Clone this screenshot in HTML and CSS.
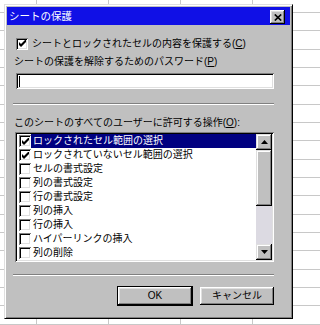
FILE: index.html
```html
<!DOCTYPE html>
<html lang="ja">
<head>
<meta charset="utf-8">
<link rel="stylesheet" href="styles.css">
</head>
<body>
<div class="dialog">
  <div class="titlebar">
    <span class="title">シートの保護</span>
    <span class="close"><svg width="8" height="7" viewBox="0 0 8 7"><path d="M0.8 0.5 L7.2 6.5 M7.2 0.5 L0.8 6.5" stroke="#000" stroke-width="1.7" fill="none"/></svg></span>
  </div>
  <div class="content">
    <div class="check-row">
      <span class="cb"><svg width="7" height="7" viewBox="0 0 7 7"><path d="M0 2 L2 4 L7 -1 L7 2 L2 7 L0 5 Z" fill="#000"/></svg></span>
      <span class="cb-label">シートとロックされたセルの内容を保護する(<u>C</u>)</span>
    </div>
    <div class="label pw-label">シートの保護を解除するためのパスワード(<u>P</u>)</div>
    <div class="textbox"><span class="caret"></span></div>
    <div class="sep sep-top"></div>
    <div class="label ops-label">このシートのすべてのユーザーに許可する操作(<u>O</u>):</div>
    <div class="list">
      <div class="rows">
        <div class="row selected"><span class="cb small"><svg width="7" height="7" viewBox="0 0 7 7"><path d="M0 2 L2 4 L7 -1 L7 2 L2 7 L0 5 Z" fill="#000"/></svg></span><span class="row-text">ロックされたセル範囲の選択</span></div>
        <div class="row"><span class="cb small"><svg width="7" height="7" viewBox="0 0 7 7"><path d="M0 2 L2 4 L7 -1 L7 2 L2 7 L0 5 Z" fill="#000"/></svg></span><span class="row-text">ロックされていないセル範囲の選択</span></div>
        <div class="row"><span class="cb small"></span><span class="row-text">セルの書式設定</span></div>
        <div class="row"><span class="cb small"></span><span class="row-text">列の書式設定</span></div>
        <div class="row"><span class="cb small"></span><span class="row-text">行の書式設定</span></div>
        <div class="row"><span class="cb small"></span><span class="row-text">列の挿入</span></div>
        <div class="row"><span class="cb small"></span><span class="row-text">行の挿入</span></div>
        <div class="row"><span class="cb small"></span><span class="row-text">ハイパーリンクの挿入</span></div>
        <div class="row"><span class="cb small"></span><span class="row-text">列の削除</span></div>
      </div>
      <div class="scrollbar">
        <div class="sb-btn"><svg width="7" height="4" viewBox="0 0 7 4"><path d="M3.5 0 L7 4 L0 4 Z" fill="#000"/></svg></div>
        <div class="sb-thumb"></div>
        <div class="sb-track"></div>
        <div class="sb-btn"><svg width="7" height="4" viewBox="0 0 7 4"><path d="M0 0 L7 0 L3.5 4 Z" fill="#000"/></svg></div>
      </div>
    </div>
    <div class="sep sep-bottom"></div>
    <div class="buttons">
      <button class="btn default">OK</button>
      <button class="btn">キャンセル</button>
    </div>
  </div>
</div>
</body>
</html>
```
FILE: styles.css
```css
html, body {
  margin: 0;
  padding: 0;
}
body {
  width: 294px;
  height: 325px;
  overflow: hidden;
  background-color: #fff;
  background-image:
    repeating-linear-gradient(to right, transparent 0 36px, #c8c8c8 36px 37px, transparent 37px 72px),
    repeating-linear-gradient(to bottom, transparent 0 12px, #c8c8c8 12px 13px, transparent 13px 18.33px);
  background-position: 0 0, 0 0;
  font-family: "Liberation Sans", "Noto Sans CJK JP", sans-serif;
  font-size: 10px;
  color: #000;
}
.dialog {
  box-sizing: border-box;
  width: 289px;
  height: 315px;
  margin: 4px 0 0 4px;
  padding: 2px;
  background: #c0c0c0;
  border: 1px solid;
  border-color: #dfdfdf #000 #000 #dfdfdf;
  box-shadow: inset 1px 1px #fff, inset -1px -1px #808080;
}
.titlebar {
  height: 18px;
  background: #1010e6;
  display: flex;
  align-items: flex-start;
  justify-content: space-between;
}
.title {
  color: #fff;
  font-size: 10.5px;
  line-height: 18px;
  padding-left: 2px;
}
.close {
  box-sizing: border-box;
  width: 15px;
  height: 14px;
  margin: 3px 5px 0 0;
  background: #c0c0c0;
  box-shadow: inset -1px -1px #000, inset 1px 1px #fff, inset -2px -2px #808080, inset 2px 2px #dfdfdf;
  display: flex;
  align-items: center;
  justify-content: center;
}
.content {
  padding: 0 16px 0 6px;
}
.check-row {
  display: flex;
  align-items: center;
  height: 13px;
  margin: 12px 0 0 3px;
}
.cb {
  box-sizing: border-box;
  width: 12px;
  height: 12px;
  flex: none;
  background: #fff;
  box-shadow: inset 1px 1px #808080, inset -1px -1px #fff, inset 2px 2px #000, inset -2px -2px #dfdfdf;
  display: flex;
  align-items: center;
  justify-content: center;
}
.cb svg {
  display: block;
}
.cb-label {
  margin-left: 4px;
  line-height: 13px;
  white-space: nowrap;
}
.label {
  line-height: 12px;
  padding-left: 1px;
  white-space: nowrap;
}
.pw-label {
  margin-top: 6px;
}
.textbox {
  box-sizing: border-box;
  height: 16px;
  margin: 5px 0 0 3px;
  background: #fff;
  box-shadow: inset 1px 1px #808080, inset -1px -1px #fff, inset 2px 2px #000, inset -2px -2px #dfdfdf;
  padding: 3px 0 0 3px;
}
.caret {
  display: block;
  width: 1px;
  height: 11px;
  background: #000;
}
.sep {
  height: 1px;
  border-top: 1px solid #808080;
  border-bottom: 1px solid #fff;
  height: 0;
}
.sep-top {
  margin-top: 14px;
}
.ops-label {
  margin-top: 12px;
}
.list {
  box-sizing: border-box;
  height: 130px;
  margin: 3px 0 0 2px;
  padding: 2px;
  background: #fff;
  box-shadow: inset 1px 1px #808080, inset -1px -1px #fff, inset 2px 2px #000, inset -2px -2px #dfdfdf;
  display: flex;
}
.rows {
  flex: 1;
  display: flex;
  flex-direction: column;
}
.row {
  height: 14px;
  display: flex;
  align-items: center;
}
.row .cb {
  margin-left: 2px;
}
.row-text {
  flex: 1;
  height: 14px;
  line-height: 14px;
  padding-left: 2px;
  white-space: nowrap;
}
.row.selected .row-text {
  background: #000080;
  color: #fff;
}
.scrollbar {
  width: 16px;
  display: flex;
  flex-direction: column;
}
.sb-btn {
  box-sizing: border-box;
  height: 16px;
  background: #c0c0c0;
  box-shadow: inset -1px -1px #000, inset 1px 1px #dfdfdf, inset -2px -2px #808080, inset 2px 2px #fff;
  display: flex;
  align-items: center;
  justify-content: center;
}
.sb-thumb {
  height: 56px;
  background: #c0c0c0;
  box-shadow: inset -1px -1px #000, inset 1px 1px #dfdfdf, inset -2px -2px #808080, inset 2px 2px #fff;
}
.sb-track {
  flex: 1;
  background: #dcdae2;
}
.sep-bottom {
  margin-top: 12px;
}
.buttons {
  display: flex;
  justify-content: flex-end;
  gap: 8px;
  margin-top: 11px;
}
.btn {
  box-sizing: border-box;
  width: 74px;
  height: 18px;
  padding: 0;
  border: none;
  background: #c0c0c0;
  font-family: "Liberation Sans", "Noto Sans CJK JP", sans-serif;
  font-size: 10px;
  line-height: 18px;
  color: #000;
  box-shadow: inset -1px -1px #000, inset 1px 1px #fff, inset -2px -2px #808080, inset 2px 2px #dfdfdf;
}
.btn.default {
  outline: 1px solid #000;
}
```
